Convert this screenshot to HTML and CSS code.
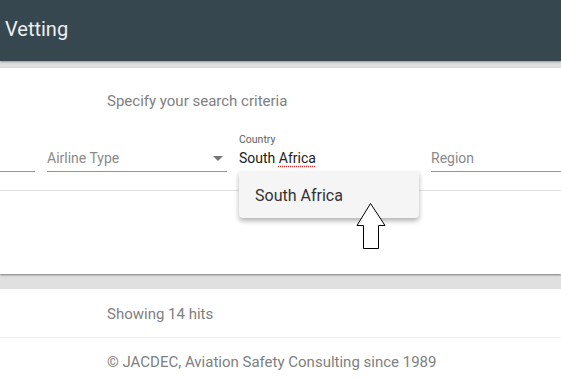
FILE: index.html
```html
<!DOCTYPE html>
<html lang="en">
	<head>
		<meta charset="UTF-8" />
		<title>Vetting</title>
		<link rel="stylesheet" href="styles.css">
	</head>
	<body>
		<header class="topbar">Vetting</header>

		<section class="search-card">
			<div class="hint">Specify your search criteria</div>
			<div class="fields">
				<div class="field">
					<div class="label"></div>
					<div class="input"></div>
				</div>
				<div class="field">
					<div class="label"></div>
					<div class="input placeholder">
						Airline Type
						<span class="caret"></span>
					</div>
				</div>
				<div class="field active">
					<div class="label">Country</div>
					<div class="input">South <span class="spell">Africa</span></div>
					<div class="options">
						<div class="option">South Africa</div>
					</div>
				</div>
				<div class="field">
					<div class="label"></div>
					<div class="input placeholder">Region</div>
				</div>
			</div>
			<div class="divider"></div>
		</section>

		<section class="results">Showing 14 hits</section>
		<footer class="footer">© JACDEC, Aviation Safety Consulting since 1989</footer>

		<svg class="pointer" width="34" height="50" viewBox="0 0 34 50">
			<path d="M15.5 1.5 L2 23.5 L8.5 23.5 L8.5 46.5 L23.5 46.5 L23.5 23.5 L30 23.5 Z" fill="#fff" stroke="#000" stroke-width="1" />
		</svg>
	</body>
</html>
```

FILE: styles.css
```css
body {
	margin: 0;
	background: #e0e0e0;
	font-family: Roboto, "Liberation Sans", sans-serif;
	font-size: 14px;
	color: #757575;
	overflow: hidden;
	height: 378px;
	position: relative;
}

.topbar {
	height: 61px;
	background: #37474f;
	color: #eceff1;
	font-size: 20px;
	font-weight: 400;
	line-height: 59px;
	padding-left: 5px;
	box-shadow: 0 1px 2px rgba(0, 0, 0, 0.35);
	position: relative;
}

.search-card {
	margin-top: 7px;
	height: 206px;
	background: #fff;
	padding-top: 23px;
	box-sizing: border-box;
	box-shadow: 0 1px 2px rgba(0, 0, 0, 0.45);
	overflow: hidden;
}

.hint {
	padding-left: 107px;
	font-size: 15px;
	line-height: 20px;
	color: #808080;
}

.fields {
	display: flex;
	gap: 12px;
	margin-top: 22px;
	margin-left: -145px;
	width: 756px;
}

.field {
	position: relative;
	flex: 0 0 180px;
	border-bottom: 1px solid #949494;
}

.field.active {
	border-bottom: 2px solid #37474f;
	margin-bottom: -1px;
}

.label {
	height: 14px;
	font-size: 10.5px;
	line-height: 14px;
	color: #616161;
}

.input {
	position: relative;
	height: 24px;
	line-height: 22px;
	color: #212121;
}

.input.placeholder {
	color: #8a8a8a;
}

.spell {
	text-decoration: underline dotted #d32f2f;
	text-underline-offset: 3px;
}

.caret {
	position: absolute;
	right: 4px;
	top: 9px;
	border-left: 5px solid transparent;
	border-right: 5px solid transparent;
	border-top: 5px solid #757575;
}

.options {
	position: absolute;
	top: 100%;
	left: 0;
	width: 180px;
	background: #f5f5f5;
	border-radius: 0 0 4px 4px;
	box-shadow: 0 3px 5px rgba(0, 0, 0, 0.3);
	z-index: 2;
}

.option {
	height: 47px;
	line-height: 50px;
	padding-left: 16px;
	font-size: 16px;
	color: #333;
}

.divider {
	margin-top: 18px;
	border-top: 1px solid #e0e0e0;
}

.results {
	margin-top: 15px;
	height: 48px;
	line-height: 50px;
	background: #fff;
	padding-left: 107px;
	font-size: 15px;
	color: #808080;
	border-bottom: 1px solid #eeeeee;
}

.footer {
	height: 40px;
	line-height: 48px;
	background: #fff;
	padding-left: 107px;
	font-size: 15px;
	color: #808080;
}

.pointer {
	position: absolute;
	left: 355px;
	top: 202px;
	z-index: 3;
}
```
